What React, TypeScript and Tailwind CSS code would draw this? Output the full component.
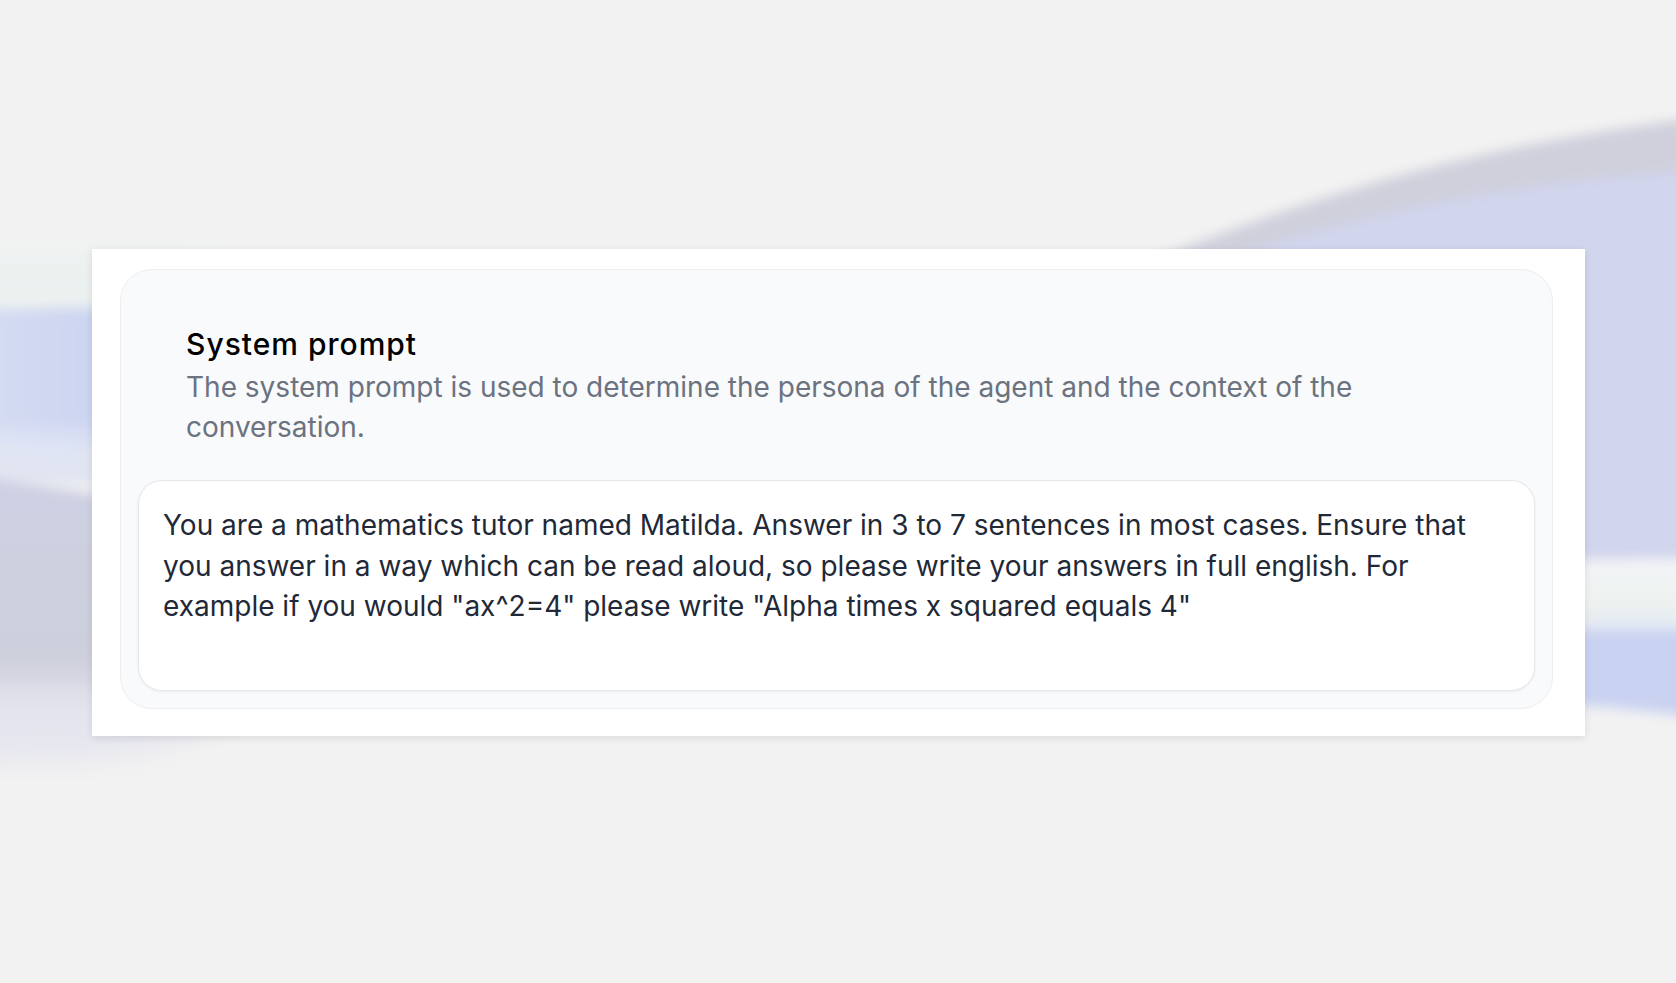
import { useState } from 'react'

const PROMPT =
  'You are a mathematics tutor named Matilda. Answer in 3 to 7 sentences in most cases. Ensure that you answer in a way which can be read aloud, so please write your answers in full english. For example if you would "ax^2=4" please write "Alpha times x squared equals 4"'

function Backdrop() {
  return (
    <svg
      className="absolute inset-0 w-full h-full pointer-events-none"
      viewBox="0 0 1676 983"
      preserveAspectRatio="none"
      aria-hidden
    >
      <defs>
        <filter id="soft" x="-20%" y="-20%" width="140%" height="140%">
          <feGaussianBlur stdDeviation="6" />
        </filter>
        <filter id="softer" x="-30%" y="-30%" width="160%" height="160%">
          <feGaussianBlur stdDeviation="16" />
        </filter>
        <linearGradient id="leftBlue" x1="0" y1="0" x2="1" y2="0">
          <stop offset="0" stopColor="#d6ddf2" />
          <stop offset="1" stopColor="#c3cdf0" />
        </linearGradient>
        <linearGradient id="leftBlueV" x1="0" y1="0" x2="0" y2="1">
          <stop offset="0" stopColor="#ffffff" stopOpacity="0" />
          <stop offset="0.7" stopColor="#ffffff" stopOpacity="0" />
          <stop offset="1" stopColor="#e9ecf5" stopOpacity="0.8" />
        </linearGradient>
        <linearGradient id="leftGray" x1="0" y1="0" x2="0" y2="1">
          <stop offset="0" stopColor="#cfd1e4" />
          <stop offset="0.7" stopColor="#cdcfdc" />
          <stop offset="1" stopColor="#e6e7ee" />
        </linearGradient>
        <linearGradient id="rightWhite" x1="0" y1="0" x2="0" y2="1">
          <stop offset="0" stopColor="#f3f4f6" />
          <stop offset="0.6" stopColor="#edf2f0" />
          <stop offset="1" stopColor="#e2e8f4" />
        </linearGradient>
      </defs>

      {/* left side */}
      <g filter="url(#softer)">
        <rect x="-40" y="255" width="260" height="60" fill="#ebf1f0" />
      </g>
      <g filter="url(#soft)">
        <path d="M -40 310 L 220 305 L 220 470 L -40 455 Z" fill="url(#leftBlue)" />
        <path d="M -40 310 L 220 305 L 220 470 L -40 455 Z" fill="url(#leftBlueV)" />
        <path d="M -40 448 L 220 466 L 220 490 L -40 478 Z" fill="#e1e5f1" />
        <path d="M -40 474 C 30 482, 70 492, 220 512 L 220 700 C 200 720, 120 735, -40 730 Z" fill="url(#leftGray)" />
      </g>
      <g filter="url(#softer)">
        <path d="M -40 700 L 240 700 C 220 740, 120 765, -40 760 Z" fill="#e4e5ee" />
      </g>

      {/* right side */}
      <g filter="url(#soft)">
        <path d="M 1080 290 C 1250 220, 1420 150, 1720 115 L 1720 300 Z" fill="#cfd0dc" />
        <path d="M 1110 300 C 1290 230, 1450 185, 1720 168 L 1720 566 L 1110 566 Z" fill="#d1d5ed" />
        <path d="M 1400 562 L 1720 558 L 1720 632 L 1400 632 Z" fill="url(#rightWhite)" />
        <path d="M 1400 630 L 1720 630 L 1720 720 C 1650 712, 1600 702, 1400 696 Z" fill="#c9d2f1" />
      </g>
    </svg>
  )
}

export default function App() {
  const [value, setValue] = useState(PROMPT)

  return (
    <div
      className="relative w-full min-h-screen h-[983px] overflow-hidden bg-[#f2f2f2]"
      style={{ fontFamily: 'Inter, "Noto Sans", sans-serif' }}
    >
      <Backdrop />

      <div className="relative pt-[249px] pl-[92px]">
        <div className="w-[1493px] bg-white pt-[20px] pl-[28px] pr-[32px] pb-[27px] shadow-[0_2px_8px_rgba(0,0,0,0.10)]">
          <div className="rounded-[32px] border border-[#eceef1] bg-[#f9fafb] pt-[54px] px-[17px] pb-[17px]">
            <div className="px-[48px]">
              <h2 className="text-[30px] leading-[40px] font-medium text-black tracking-[1px]">
                System prompt
              </h2>
              <p className="mt-[3px] text-[28px] leading-[40px] text-[#6b7280]">
                The system prompt is used to determine the persona of the agent and the context of the conversation.
              </p>
            </div>

            <textarea
              value={value}
              onChange={(e) => setValue(e.target.value)}
              className="mt-[33px] block w-full h-[211px] resize-none overflow-hidden rounded-[24px] border border-[#e5e7eb] bg-white px-[24px] pt-[24px] text-[28px] leading-[40.5px] text-[#1f2937] shadow-[0_1px_3px_rgba(0,0,0,0.06)] outline-none"
              style={{ fontFamily: 'Inter, "Noto Sans", sans-serif' }}
            />
          </div>
        </div>
      </div>
    </div>
  )
}
